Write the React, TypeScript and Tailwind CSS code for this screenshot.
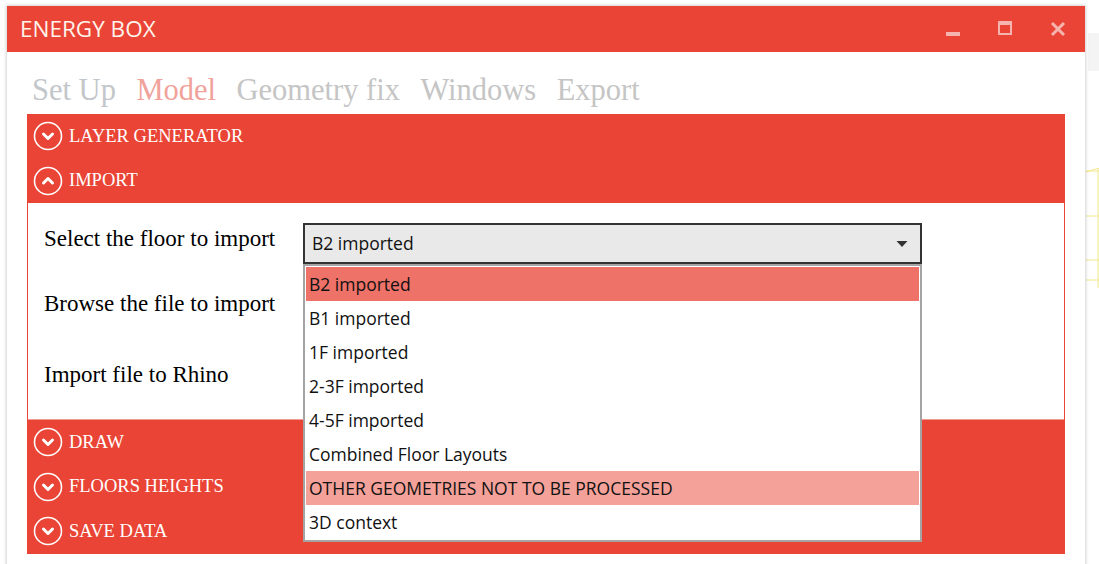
import React from "react";

const RED = "bg-[#e94435]";

const sections = ["LAYER GENERATOR", "IMPORT", "DRAW", "FLOORS HEIGHTS", "SAVE DATA"];

const floors = [
  "B2 imported",
  "B1 imported",
  "1F imported",
  "2-3F imported",
  "4-5F imported",
  "Combined Floor Layouts",
  "OTHER GEOMETRIES NOT TO BE PROCESSED",
  "3D context",
];

function CircleChevron({ up }: { up?: boolean }) {
  return (
    <svg width="30" height="30" viewBox="0 0 30 30" className="shrink-0">
      <circle cx="15" cy="15" r="13.5" fill="none" stroke="white" strokeWidth="1.6" />
      <path
        d={up ? "M10.5 17 L15 12.5 L19.5 17" : "M10.5 13 L15 17.5 L19.5 13"}
        fill="none"
        stroke="white"
        strokeWidth="3"
        strokeLinecap="round"
        strokeLinejoin="round"
      />
    </svg>
  );
}

function SectionHeader({ title, open }: { title: string; open?: boolean }) {
  return (
    <div className="flex items-center h-[44.5px] pl-[6px] gap-[6px]">
      <CircleChevron up={open} />
      <span className="text-white text-[18.5px] font-['Liberation_Serif',serif] pt-[1px]">{title}</span>
    </div>
  );
}

export default function App() {
  return (
    <div className="relative w-[1099px] h-[564px] overflow-hidden bg-white">
      {/* app behind the window */}
      <div className="absolute left-[1088px] top-[33px] w-[11px] h-[38px] bg-[#f4f4f4]" />
      <svg className="absolute left-[1086px] top-[168px]" width="13" height="120" viewBox="0 0 13 120">
        <path d="M0 3 H13 M0 4 L13 0 M0 48 H13 M0 92 H13 M12 0 V120 M0 112 H13" stroke="#f3e88a" strokeWidth="1" fill="none" />
      </svg>

      <div className="absolute left-[7px] top-[6px] w-[1078px] h-[570px] bg-white shadow-[0_0_3px_1px_rgba(0,0,0,0.18)] flex flex-col">
        {/* title bar */}
        <div className={`${RED} h-[46px] flex items-center px-[13px] shrink-0`}>
          <span className="text-[#fff3ea] text-[22.5px] font-['Open_Sans',sans-serif] leading-none">ENERGY BOX</span>
          <div className="ml-auto flex items-center">
            <div className="w-[14px] h-[4px] bg-white/60 mt-[9px] mr-[38px]" />
            <div className="w-[14px] h-[14px] border-[2px] border-white/60 border-t-[4px] mr-[38px] mb-[2px]" />
            <svg width="16" height="16" viewBox="0 0 16 16" className="mr-[6px] mb-[1px]">
              <path d="M2 2 L14 14 M14 2 L2 14" stroke="rgba(255,255,255,0.6)" strokeWidth="3" />
            </svg>
          </div>
        </div>

        {/* tabs */}
        <div className="flex items-end gap-[20.5px] h-[62px] pl-[25px] pb-[9px] text-[30.5px] font-['Liberation_Serif',serif] leading-none shrink-0">
          <span className="text-[#c3c6ca]">Set Up</span>
          <span className="text-[#f0a29b]">Model</span>
          <span className="text-[#c5c5c5]">Geometry fix</span>
          <span className="text-[#c5c5c5]">Windows</span>
          <span className="text-[#c5c5c5]">Export</span>
        </div>

        {/* accordion */}
        <div className={`${RED} mx-[20px] w-[1038px] flex flex-col relative`}>
          <SectionHeader title={sections[0]} />
          <SectionHeader title={sections[1]} open />

          <div className="bg-white mx-[1px] h-[217px] border-b border-[#f19a92] relative">
            <div className="flex flex-col pl-[16px] pt-[24px] text-[23px] text-black font-['Liberation_Serif',serif] leading-none">
              <span className="h-[65px]">Select the floor to import</span>
              <span className="h-[71px]">Browse the file to import</span>
              <span>Import file to Rhino</span>
            </div>

            {/* combobox */}
            <div className="absolute left-[275px] top-[20px] w-[619px] h-[41px] bg-[#e9e9e9] border-[2px] border-[#333] flex items-center pl-[7px] pr-[12px] font-['Open_Sans',sans-serif] text-[17.5px] text-[#111]">
              <span>B2 imported</span>
              <svg width="12" height="8" viewBox="0 0 12 8" className="ml-auto">
                <path d="M0.5 1 L11.5 1 L6 7 Z" fill="#333" />
              </svg>
            </div>

            {/* dropdown list */}
            <div className="absolute left-[275px] top-[61px] w-[619px] z-10 bg-white border-[2px] border-[#a4a4a4] p-[1px] flex flex-col font-['Open_Sans',sans-serif] text-[17.5px] text-[#111]">
              {floors.map((f, i) => {
                let bg = "bg-white";
                if (i === 0) bg = "bg-[#ee7268]";
                if (i === 6) bg = "bg-[#f4a19a]";
                return (
                  <div key={f} className={`${bg} h-[34px] flex items-center pl-[3px]`}>
                    {f}
                  </div>
                );
              })}
            </div>
          </div>

          <SectionHeader title={sections[2]} />
          <SectionHeader title={sections[3]} />
          <SectionHeader title={sections[4]} />
        </div>
      </div>
    </div>
  );
}
